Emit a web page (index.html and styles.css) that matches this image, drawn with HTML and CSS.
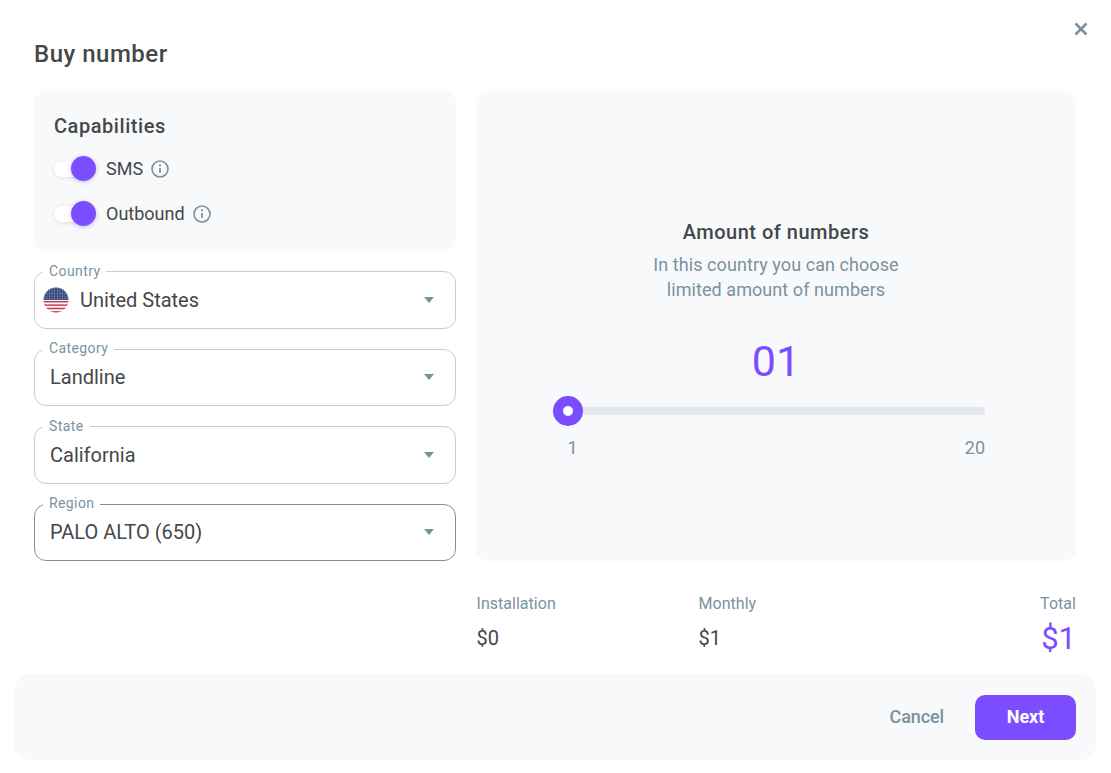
FILE: index.html
```html
<!DOCTYPE html>
<html lang="en">
<head>
<meta charset="utf-8">
<title>Buy number</title>
<link rel="stylesheet" href="styles.css">
</head>
<body>
<div class="modal">
  <button class="close" aria-label="Close">
    <svg width="14" height="14" viewBox="0 0 14 14"><path d="M1.5 1.5l11 11M12.5 1.5l-11 11" stroke="#7a929f" stroke-width="2.6" fill="none"/></svg>
  </button>
  <h1 class="title">Buy number</h1>
  <div class="content">
    <div class="left">
      <section class="caps">
        <h2 class="caps-title">Capabilities</h2>
        <div class="cap-row">
          <span class="toggle"><span class="knob"></span></span>
          <span class="cap-label">SMS</span>
          <svg class="info" width="18" height="18" viewBox="0 0 18 18"><circle cx="9" cy="9" r="8" fill="none" stroke="#7a929f" stroke-width="1.6"/><path d="M9 8v5" stroke="#7a929f" stroke-width="1.7"/><circle cx="9" cy="5.4" r="1.05" fill="#7a929f"/></svg>
        </div>
        <div class="cap-row">
          <span class="toggle"><span class="knob"></span></span>
          <span class="cap-label">Outbound</span>
          <svg class="info" width="18" height="18" viewBox="0 0 18 18"><circle cx="9" cy="9" r="8" fill="none" stroke="#7a929f" stroke-width="1.6"/><path d="M9 8v5" stroke="#7a929f" stroke-width="1.7"/><circle cx="9" cy="5.4" r="1.05" fill="#7a929f"/></svg>
        </div>
      </section>
      <div class="field">
        <span class="field-label">Country</span>
        <svg class="flag" width="26" height="26" viewBox="0 0 26 26">
          <defs><clipPath id="round"><circle cx="13" cy="13" r="12.5"/></clipPath><pattern id="stars" width="2.6" height="2.6" patternUnits="userSpaceOnUse"><rect width="2.6" height="2.6" fill="#3b4a7c"/><circle cx="1.3" cy="1.3" r=".55" fill="#aab2cc"/></pattern></defs>
          <g clip-path="url(#round)">
            <rect width="26" height="26" fill="#f4f4f6"/>
            <rect y="14" width="26" height="1.4" fill="#c8364a"/>
            <rect y="17.4" width="26" height="1.4" fill="#c8364a"/>
            <rect y="20.8" width="26" height="1.4" fill="#c8364a"/>
            <rect y="24.2" width="26" height="1.8" fill="#c8364a"/>
            <rect width="26" height="13" fill="url(#stars)"/>
          </g>
        </svg>
        <span class="field-value">United States</span>
        <span class="caret"></span>
      </div>
      <div class="field">
        <span class="field-label">Category</span>
        <span class="field-value">Landline</span>
        <span class="caret"></span>
      </div>
      <div class="field">
        <span class="field-label">State</span>
        <span class="field-value">California</span>
        <span class="caret"></span>
      </div>
      <div class="field field-active">
        <span class="field-label">Region</span>
        <span class="field-value">PALO ALTO (650)</span>
        <span class="caret"></span>
      </div>
    </div>
    <div class="right">
      <section class="amount">
        <h2 class="amount-title">Amount of numbers</h2>
        <p class="amount-text">In this country you can choose<br>limited amount of numbers</p>
        <div class="amount-value">01</div>
        <div class="slider"><span class="thumb"></span></div>
        <div class="range"><span>1</span><span>20</span></div>
      </section>
      <div class="summary">
        <div class="sum sum-install"><span class="sum-label">Installation</span><span class="sum-value">$0</span></div>
        <div class="sum sum-month"><span class="sum-label">Monthly</span><span class="sum-value">$1</span></div>
        <div class="sum sum-total"><span class="sum-label">Total</span><span class="sum-value sum-big">$1</span></div>
      </div>
    </div>
  </div>
  <footer class="footer">
    <button class="btn-cancel">Cancel</button>
    <button class="btn-next">Next</button>
  </footer>
</div>
</body>
</html>
```
FILE: styles.css
```css
* { box-sizing: border-box; }
html, body { margin: 0; padding: 0; background: #fff; }
body { font-family: Roboto, "Liberation Sans", sans-serif; color: #43484a; width: 1111px; height: 773px; overflow: hidden; }
.modal { position: relative; width: 1111px; height: 773px; padding: 0 14px; }
.close { position: absolute; top: 22px; left: 1074px; width: 14px; height: 14px; padding: 0; border: 0; background: none; display: flex; }
.title { margin: 0; padding: 39px 0 0 20px; height: 91px; font-size: 24px; font-weight: 500; line-height: 30px; letter-spacing: .5px; color: #43484a; }
.content { display: flex; gap: 20px; padding: 0 20px; height: 583px; }
.left { width: 422px; display: flex; flex-direction: column; gap: 20px; }
.caps { height: 160px; background: #f8f9fb; border-radius: 12px; padding: 23px 20px 0; }
.caps-title { margin: 0 0 8px; font-size: 20px; line-height: 24px; font-weight: 500; letter-spacing: .55px; color: #43484a; }
.cap-row { display: flex; align-items: center; height: 45px; }
.toggle { position: relative; width: 36px; height: 16px; border-radius: 8px; background: #fff; box-shadow: 0 1px 4px rgba(120,130,150,.2); margin-right: 16px; flex: none; }
.knob { position: absolute; left: 17px; top: -4.5px; width: 25px; height: 25px; border-radius: 50%; background: #7c4dff; box-shadow: 0 1px 4px rgba(90,70,160,.3); }
.cap-label { font-size: 18px; line-height: 24px; color: #43484a; margin-right: 8px; }
.info { flex: none; }
.field { position: relative; height: 57.5px; flex: none; border: 1px solid #c9ced1; border-radius: 12px; display: flex; align-items: center; padding: 0 15px; }
.field-active { border-color: #7a929f; }
.field-label { position: absolute; top: -10.5px; left: 8px; padding: 0 6px; background: #fff; font-size: 14px; line-height: 18px; letter-spacing: .4px; color: #7a929f; }
.field-value { flex: 1; font-size: 20px; line-height: 28px; color: #43484a; }
.flag { flex: none; margin: 0 11px 0 -7px; }
.caret { flex: none; width: 0; height: 0; margin-right: 6px; border-left: 5.5px solid transparent; border-right: 5.5px solid transparent; border-top: 6.5px solid #7a929f; }
.right { width: 600px; display: flex; flex-direction: column; }
.amount { height: 470px; background: #f8f9fb; border-radius: 12px; padding: 127px 0 0; display: flex; flex-direction: column; align-items: stretch; }
.amount-title { margin: 0; font-size: 20px; line-height: 28px; font-weight: 500; letter-spacing: .5px; text-align: center; color: #43484a; }
.amount-text { margin: 6px 0 0; font-size: 18px; line-height: 25px; letter-spacing: .07px; text-align: center; color: #7a929f; }
.amount-value { margin-top: 31px; font-size: 43px; line-height: 56px; text-align: center; color: #7c4dff; }
.slider { position: relative; height: 8px; margin: 18px 91px 0 77px; background: #e4e6ee; border-radius: 4px; }
.thumb { position: absolute; left: -.5px; top: -11px; width: 30px; height: 30px; border-radius: 50%; background: #fff; border: 10px solid #7c4dff; }
.range { display: flex; justify-content: space-between; margin: 21px 91px 0 91.5px; font-size: 18px; line-height: 24px; color: #7a929f; }
.summary { display: grid; grid-template-columns: 222.5px 1fr auto; padding-top: 34px; }
.sum { display: flex; flex-direction: column; }
.sum-label { font-size: 16px; line-height: 18px; letter-spacing: .03px; color: #7a929f; }
.sum-install { padding-left: .5px; }
.sum-value { margin-top: 13px; font-size: 20px; line-height: 24px; color: #43484a; }
.sum-total { align-items: flex-end; }
.sum-big { margin-top: 7px; font-size: 31px; line-height: 38px; color: #7c4dff; }
.footer { width: 1082px; height: 86px; background: #f8f9fb; border-radius: 16px; display: flex; align-items: center; justify-content: flex-end; padding: 0 20px; gap: 31px; }
.btn-cancel { border: 0; background: none; padding: 0; font: 500 18px/24px Roboto, sans-serif; letter-spacing: -.1px; color: #7a929f; }
.btn-next { width: 101px; height: 45px; border: 0; border-radius: 10px; background: #7c4dff; color: #fff; font: 700 18px/24px Roboto, sans-serif; letter-spacing: -.1px; }
```
